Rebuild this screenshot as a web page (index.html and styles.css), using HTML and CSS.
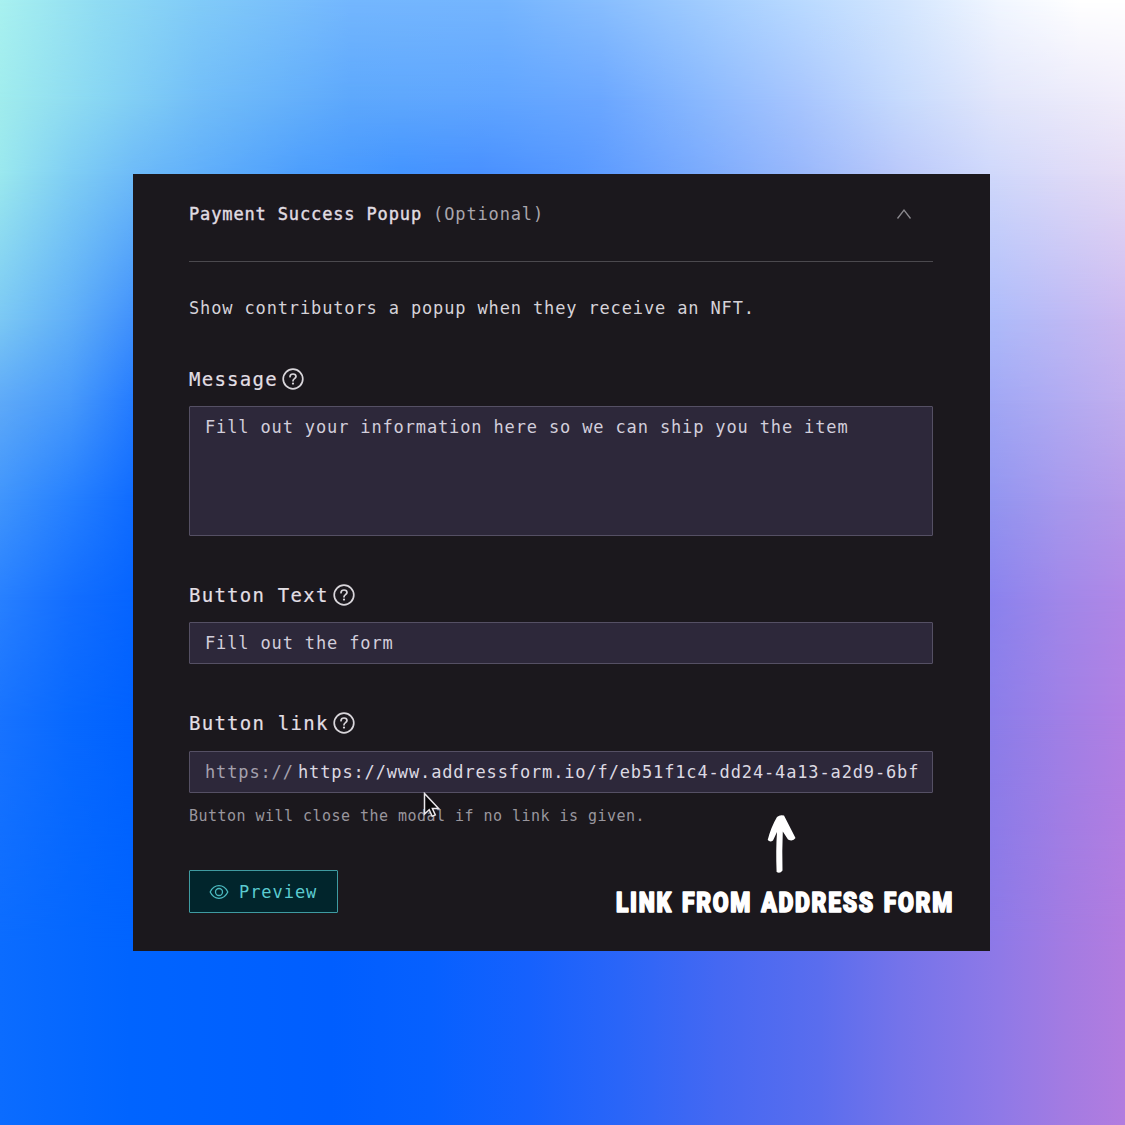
FILE: index.html
```html
<!DOCTYPE html>
<html lang="en">
<head>
<meta charset="utf-8">
<title>Payment Success Popup</title>
<link rel="stylesheet" href="styles.css">
</head>
<body>
<div class="backdrop">
  <div class="band band-1"></div>
  <div class="band band-2"></div>
  <div class="band band-3"></div>
  <div class="band band-4"></div>
  <div class="band band-5"></div>
  <div class="band band-6"></div>
  <div class="band band-7"></div>
  <div class="band band-8"></div>
  <div class="band band-9"></div>
</div>
<main class="panel">
  <header class="panel-header">
    <h1 class="title">Payment Success Popup <span class="optional">(Optional)</span></h1>
    <svg class="chevron" viewBox="0 0 16 12" width="16" height="12"><path d="M1.5 10.500 8 2l6.500 8.500"/></svg>
  </header>
  <p class="intro">Show contributors a popup when they receive an NFT.</p>

  <section class="field">
    <div class="label">Message<svg class="help" viewBox="0 0 22 22" width="22" height="22"><circle cx="11" cy="11" r="9.8"/><path d="M8 8.7c0-1.7 1.2-2.7 3-2.7s3 1 3 2.6c0 2-3 2.1-3 4.2"/><circle class="dot" cx="11" cy="15.6" r="1.1"/></svg></div>
    <div class="control textarea">Fill out your information here so we can ship you the item</div>
  </section>

  <section class="field">
    <div class="label">Button Text<svg class="help" viewBox="0 0 22 22" width="22" height="22"><circle cx="11" cy="11" r="9.8"/><path d="M8 8.7c0-1.7 1.2-2.7 3-2.7s3 1 3 2.6c0 2-3 2.1-3 4.2"/><circle class="dot" cx="11" cy="15.6" r="1.1"/></svg></div>
    <div class="control">Fill out the form</div>
  </section>

  <section class="field field-link">
    <div class="label">Button link<svg class="help" viewBox="0 0 22 22" width="22" height="22"><circle cx="11" cy="11" r="9.8"/><path d="M8 8.7c0-1.7 1.2-2.7 3-2.7s3 1 3 2.6c0 2-3 2.1-3 4.2"/><circle class="dot" cx="11" cy="15.6" r="1.1"/></svg></div>
    <div class="control"><span class="prefix">https://</span><span class="url">https://www.addressform.io/f/eb51f1c4-dd24-4a13-a2d9-6bf</span></div>
    <p class="hint">Button will close the modal if no link is given.</p>
  </section>

  <button class="preview" type="button">
    <svg class="eye" viewBox="0 0 20 16" width="20" height="16"><path d="M1.2 8C3.2 3.8 6.2 1.7 10 1.7S16.8 3.8 18.8 8C16.8 12.2 13.8 14.3 10 14.3S3.2 12.2 1.2 8Z"/><circle cx="10" cy="8" r="3.5"/></svg>
    Preview
  </button>

  <svg class="cursor" viewBox="0 0 18 26" width="18" height="26"><path d="M1.5 1.500V22l4.700-4.300 3 6.600 3.100-1.400-2.900-6.300h6.200Z"/></svg>
  <div class="note">
    <svg class="arrow" viewBox="0 0 30 60" width="30" height="60"><path d="M10 3Q13 .2 17 1.600L28.500 24Q26 28 21 25.500L15.800 17.500Q15 36 15.500 56.500Q13 60 9.600 58Q8.700 36 10 18L6 26.500Q3 28.500.700 26Q4 13 10 3Z"/></svg>
    <svg class="caption" width="340" height="28"><text x="1" y="24" textLength="338" lengthAdjust="spacingAndGlyphs">LINK FROM ADDRESS FORM</text></svg>
  </div>
</main>
</body>
</html>
```
FILE: styles.css
```css
* { box-sizing: border-box; }
body {
  margin: 0;
  width: 1125px;
  height: 1125px;
  padding: 174px 135px 174px 133px;
  overflow: hidden;
  font-family: "DejaVu Sans Mono", monospace;
  font-size: 17px;
  letter-spacing: 0.86px;
}

/* Mesh gradient: each band fades in over the one before it */
.backdrop, .band { position: absolute; inset: 0; }
.backdrop { overflow: hidden; }
.band-1 { background: linear-gradient(90deg, #a8f1f0 0, #90dcf3 100px, #81cbf8 200px, #74b7fe 350px, #75b5fe 500px, #88befe 600px, #a0ccfe 700px, #b9daff 800px, #d3e6fe 900px, #f2f7ff 1000px, #fff 1080px); }
.band-2 { background: linear-gradient(90deg, #a0eced 0, #88d6f3 100px, #72bef8 200px, #5da8fc 350px, #60a5ff 500px, #6ba7ff 600px, #89b8fe 700px, #a7c5fe 800px, #c6dafd 900px, #e2e6fb 1000px, #f1edfa 1125px); -webkit-mask: linear-gradient(transparent 0, #000 100px); }
.band-3 { background: linear-gradient(90deg, #9ae8ee 0, #7fcef4 70px, #6dbaf8 135px, #4d9efd 300px, #4394ff 400px, #4890ff 480px, #5798ff 580px, #7aaafd 700px, #98b7fb 800px, #bac8fa 900px, #cfd8fb 990px, #dcdaf8 1060px, #e5dcf5 1125px); -webkit-mask: linear-gradient(transparent 100px, #000 175px); }
.band-4 { background: linear-gradient(90deg, #7bc8f4 0, #60aff8 70px, #4090fc 135px, #3484ff 500px, #adbbfa 990px, #bcb9f5 1060px, #ccb8f0 1125px); -webkit-mask: linear-gradient(transparent 175px, #000 320px); }
.band-5 { background: linear-gradient(90deg, #5faaf8 0, #489afb 70px, #247bff 135px, #247bff 500px, #a0a7f5 990px, #b1abf2 1060px, #c1aeee 1125px); -webkit-mask: linear-gradient(transparent 320px, #000 400px); }
.band-6 { background: linear-gradient(90deg, #4095fc 0, #2680ff 70px, #0f6bff 135px, #0864ff 500px, #9295f0 990px, #a698ed 1060px, #b599e9 1125px); -webkit-mask: linear-gradient(transparent 400px, #000 500px); }
.band-7 { background: linear-gradient(90deg, #2880ff 0, #136eff 70px, #0564ff 135px, #0060ff 500px, #8a82ee 990px, #a087e9 1060px, #b087e6 1125px); -webkit-mask: linear-gradient(transparent 500px, #000 600px); }
.band-8 { background: linear-gradient(90deg, #1873ff 0, #0869ff 70px, #0061ff 135px, #005fff 500px, #8b7de9 990px, #9f7fe6 1060px, #b17fe3 1125px); -webkit-mask: linear-gradient(transparent 600px, #000 720px); }
.band-9 { background: linear-gradient(90deg, #0b6cff 0, #0064ff 130px, #005eff 330px, #0660ff 430px, #1661fd 530px, #2a65f8 620px, #4568f2 720px, #5a6dee 820px, #7473ea 900px, #8f79e7 1000px, #a37be2 1065px, #b27cdf 1125px); -webkit-mask: linear-gradient(transparent 720px, #000 950px); }

.panel {
  position: relative;
  width: 857px;
  height: 777px;
  padding: 0 57px 0 56px;
  background: #1b181d;
  color: #d5d2d8;
}
.panel-header {
  display: flex;
  align-items: center;
  justify-content: space-between;
  height: 88px;
  padding: 0 21px 7px 0;
  border-bottom: 1px solid #4b494e;
}
.title { margin: 0; font-size: 17px; font-weight: 400; line-height: 24px; color: #e0dde2; -webkit-text-stroke: 0.4px #e0dde2; }
.optional { color: #a9a6ac; -webkit-text-stroke: 0; }
.chevron { fill: none; stroke: #8b898e; stroke-width: 1.3; }
.intro { margin: 34px 0 0; line-height: 24px; }

.field { margin-top: 43px; }
.label {
  display: flex;
  align-items: center;
  gap: 4px;
  height: 32px;
  margin-bottom: 11px;
  font-size: 19px;
  letter-spacing: 1.25px;
  color: #e2dfe4;
  -webkit-text-stroke: 0.2px #e2dfe4;
}
.field-link .label { margin-bottom: 12px; }
.help { fill: none; stroke: #d9d6db; stroke-width: 1.7; stroke-linecap: round; }
.help .dot { fill: #d9d6db; stroke: none; }
.control {
  display: flex;
  height: 42px;
  padding: 8px 15px;
  border: 1px solid #555064;
  border-radius: 1px;
  background: #2d283a;
  color: #d2cedb;
  line-height: 24px;
  white-space: nowrap;
}
.textarea { height: 130px; }
.prefix { flex: none; width: 93px; color: #a5a1ae; }
.field-link .control { padding-right: 8px; }
.url { flex: none; color: #dcd9e2; }
.hint { margin: 12px 0 0; font-size: 15px; letter-spacing: 0.47px; line-height: 22px; color: #99969d; }
.preview {
  display: flex;
  align-items: center;
  gap: 10px;
  width: 149px;
  height: 43px;
  margin-top: 43px;
  padding: 0 19px;
  border: 1px solid #3f9ba1;
  border-radius: 1px;
  background: #01252c;
  color: #5bcbd0;
  font: 17px "DejaVu Sans Mono", monospace;
  letter-spacing: 0.95px;
}
.eye { flex: none; fill: none; stroke: #4bb9bf; stroke-width: 1.3; }

.cursor { position: absolute; left: 290px; top: 618px; fill: #09080a; stroke: #e9e7ea; stroke-width: 1.5; }
.note { position: absolute; left: 482px; top: 640px; width: 340px; }
.arrow { display: block; margin-left: 152px; fill: #fff; }
.caption { display: block; margin-top: 14px; overflow: visible; fill: #fff; stroke: #fff; stroke-width: 1.6; stroke-linejoin: round; font: 900 27px Roboto, sans-serif; letter-spacing: 2px; word-spacing: 2px; }
```
